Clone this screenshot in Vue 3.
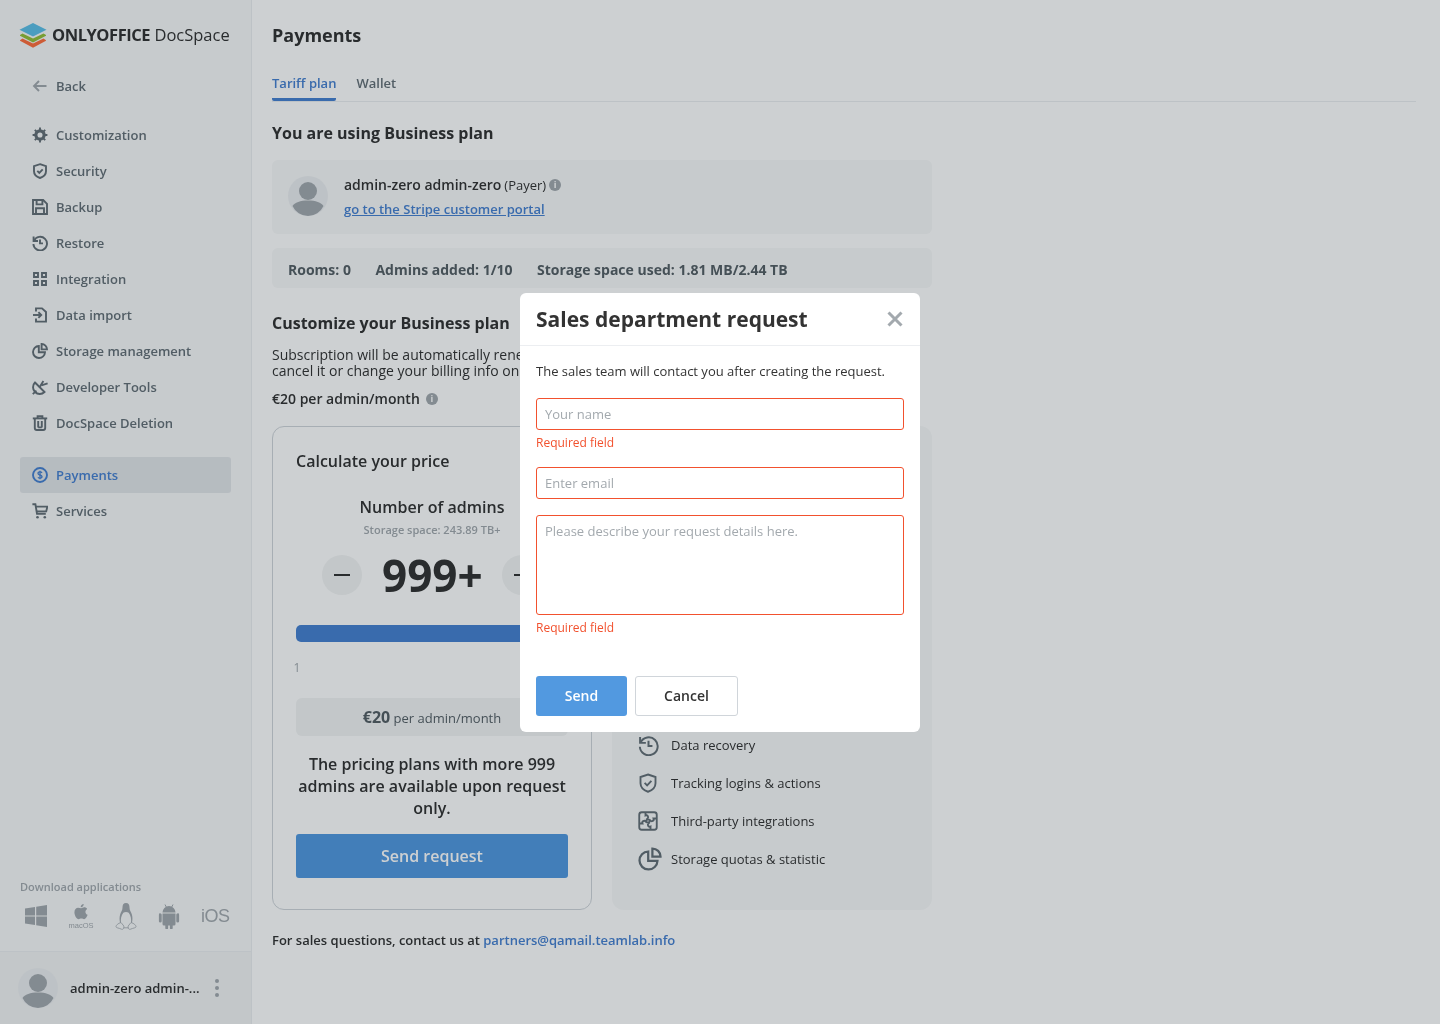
<script setup>
// --- DATA ---
const settingsMenu = [
  { label: 'Customization', paths: ['M8 .6v2.600M8 12.800v2.600M.6 8h2.600M12.800 8h2.600M2.800 2.800l1.800 1.800M11.400 11.400l1.800 1.800M2.800 13.200l1.800-1.800M11.400 4.600l1.800-1.800', 'M8 3.200a4.800 4.800 0 1 0 0 9.600a4.800 4.800 0 1 0 0-9.600z', 'M8 4.500a3.500 3.500 0 1 0 0 7a3.500 3.500 0 1 0 0-7z'] },
  { label: 'Security', paths: ['M8 1.200l6 2v5c0 3.400-2.600 5.600-6 6.800c-3.400-1.200-6-3.400-6-6.800v-5z', 'M5.300 7.900l2 2l3.400-3.600'] },
  { label: 'Backup', paths: ['M1 1h10.200l3.800 3.800v10.200h-14z', 'M4.600 1.400v4h5.800v-4', 'M4 14.600v-5.400h8v5.400'] },
  { label: 'Restore', paths: ['M1.600 1.600v4.400h4.400', 'M2 5.800a6.800 6.800 0 1 1-.6 3.200', 'M8 4.400v4h3'] },
  { label: 'Integration', paths: ['M2 2h4v4h-4z', 'M10 2h4v4h-4z', 'M2 10h4v4h-4z', 'M10 10h4v4h-4z'] },
  { label: 'Data import', paths: ['M4 4.400v-3h6l4 3.600v9.600h-10v-3', 'M1 8h8', 'M6.400 5.200l2.800 2.800l-2.800 2.800'] },
  { label: 'Storage management', paths: ['M6.800 3a6 6 0 1 0 6.200 6.200h-6.200z', 'M9.600 1a5.400 5.400 0 0 1 5.400 5.400h-5.400z'] },
  { label: 'Developer Tools', paths: ['M3 3.500l9.500 9.500a6.700 6.700 0 0 1-9.500-9.500z', 'M7.400 8.400l4-6.400', 'M9.400 6.400l6.200-2', 'M4.400 11.600l-3.600 3.600'] },
  { label: 'DocSpace Deletion', paths: ['M.8 3.400h14.400', 'M5.600 3.400v-2.200h4.800v2.200', 'M2.800 3.400v9.600a2 2 0 0 0 2 2h6.400a2 2 0 0 0 2-2v-9.600', 'M6.200 6v6.400M9.800 6v6.400M6.200 12.400h3.600'] },
]

const payIcon = ['M8 1a7 7 0 1 0 0 14a7 7 0 1 0 0-14z']
const payDollar = ['M10 5.900c-.5-.8-1.200-1.100-2-1.100c-1.200 0-2 .6-2 1.600c0 2.100 4 1.100 4 3.200c0 1-.8 1.600-2 1.600c-.8 0-1.600-.3-2-1', 'M8 3.800v8.400']
const cartIcon = ['M.4 1.200h3l1.600 9.600h8.800', 'M3.800 3.600h11.600l-1.200 4.800h-9.600']

const features = [
  { label: 'Data recovery', paths: ['M1.600 1.600v4.400h4.400', 'M2 5.800a6.800 6.800 0 1 1-.6 3.200', 'M8 4.400v4h3'], size: 21 },
  { label: 'Tracking logins & actions', paths: ['M8 1.200l6 2v5c0 3.400-2.600 5.600-6 6.800c-3.400-1.200-6-3.400-6-6.800v-5z', 'M5.300 7.900l2 2l3.400-3.600'], size: 20 },
  { label: 'Third-party integrations', paths: ['M3 1h10a2 2 0 0 1 2 2v10a2 2 0 0 1-2 2h-10a2 2 0 0 1-2-2v-10a2 2 0 0 1 2-2z', 'M6 1.200L6 3.600C8 2.800 8.800 5.200 7.400 6.400L9.600 7.400', 'M14.800 6L12.400 6C13.200 8 10.800 8.800 9.600 7.400L8.600 9.600', 'M10 14.800L10 12.400C8 13.200 7.200 10.800 8.600 9.600L6.400 8.600', 'M1.200 10L3.600 10C2.800 8 5.200 7.200 6.400 8.600L7.400 6.400'], size: 20 },
  { label: 'Storage quotas & statistic', paths: ['M6.800 3a6 6 0 1 0 6.200 6.200h-6.200z', 'M9.600 1a5.400 5.400 0 0 1 5.400 5.400h-5.400z'], size: 24 },
]
</script>

<template>
  <div class="page">
    <aside class="sidebar">
      <div class="logo">
        <svg class="logo-mark" viewBox="0 0 28 25" width="28" height="25">
          <path d="M14 15.500l-10.500-5l-2.500 1.500l0 .8l13 6.700l13-6.700l0-.8l-2.500-1.500z" fill="#95c038" />
          <path d="M14 20.500l-10.500-5l-2.500 1.700l0 .6l13 7l13-7l0-.6l-2.500-1.700z" fill="#ff6f3d" />
          <path d="M14 0l13.500 6.800l-13.500 6.800l-13.500-6.800z" fill="#5dc0e8" />
        </svg>
        <span class="logo-text"><b>ONLYOFFICE</b> DocSpace</span>
      </div>

      <div class="back-row">
        <svg viewBox="0 0 16 16" width="16" height="16" class="menu-icon back-icon">
          <path d="M14.500 8h-12.500M7 3l-5 5l5 5" />
        </svg>
        <span>Back</span>
      </div>

      <nav class="menu">
        <div v-for="item in settingsMenu" :key="item.label" class="menu-item">
          <svg viewBox="0 0 16 16" width="16" height="16" class="menu-icon">
            <path v-for="d in item.paths" :key="d" :d="d" />
          </svg>
          <span>{{ item.label }}</span>
        </div>
      </nav>

      <nav class="menu menu-bottom">
        <div class="menu-item active">
          <svg viewBox="0 0 16 16" width="16" height="16" class="menu-icon">
            <path v-for="d in payIcon" :key="d" :d="d" />
            <path v-for="d in payDollar" :key="d" :d="d" class="thin" />
          </svg>
          <span>Payments</span>
        </div>
        <div class="menu-item">
          <svg viewBox="0 0 16 16" width="16" height="16" class="menu-icon">
            <path v-for="d in cartIcon" :key="d" :d="d" />
            <circle cx="5.500" cy="14.300" r="1.300" class="dot" />
            <circle cx="12.800" cy="14.300" r="1.300" class="dot" />
          </svg>
          <span>Services</span>
        </div>
      </nav>

      <div class="downloads">
        <div class="downloads-title">Download applications</div>
        <div class="app-icons">
          <svg viewBox="0 0 24 24" width="24" height="24" class="app-icon">
            <path d="M1 4.500l10-1.500v8.400h-10zM12.200 2.800l10.800-1.800v10.400h-10.800zM1 12.600h10v8.400l-10-1.500zM12.200 12.600h10.800v10.400l-10.800-1.800z" />
          </svg>
          <div class="mac">
            <svg viewBox="0 0 20 20" width="18" height="19" class="app-icon">
              <path d="M10.200 5.300c.9 0 2-1 3.400-1c1.300 0 2.500.6 3.200 1.700c-2.800 1.600-2.300 5.500.6 6.600c-.8 2-2.400 4.900-4 4.900c-1.100 0-1.600-.7-3-.7c-1.500 0-2 .7-3 .7c-2.400 0-4.700-4.500-4.700-7.800c0-3.200 2-4.900 4-4.900c1.400 0 2.500 .5 3.500.5zM13 .6c.1 1.900-1.500 3.700-3.300 3.500c-.2-1.800 1.500-3.500 3.300-3.500z" />
            </svg>
            <span>macOS</span>
          </div>
          <svg viewBox="0 0 22 28" width="22" height="28" class="tux">
            <path d="M6 20.500c-3 .8-5 2.800-5 4.200c0 1.300 3 1.300 5 2.300c2 1 3.300-.5 2.800-3z" />
            <path d="M16 20.500c3 .8 5 2.800 5 4.200c0 1.300-3 1.300-5 2.300c-2 1-3.300-.5-2.800-3z" />
            <path d="M8.500 25.800h5" />
            <path d="M11 1c-2.600 0-3.500 1.800-3.500 4.500c0 2.800-1.500 4.300-2.300 6.800c-.8 2.500-.8 5.200-.2 8.200l1 .2c-.5-3.600.2-6.900 2.300-10c1.500-1 3.900-1 5.400 0c2.100 3.100 2.800 6.400 2.300 10l1-.2c.6-3 .6-5.700-.2-8.200c-.8-2.500-2.300-4-2.300-6.800c0-2.700-.9-4.500-3.500-4.500z" class="tux-fill" />
          </svg>
          <svg viewBox="0 0 24 26" width="24" height="26" class="app-icon">
            <path d="M5.500 9.500a6.500 6.500 0 0 1 13 0zM5.500 10.500h13v10.500a1.500 1.500 0 0 1-1.500 1.500h-1.300v2.500a1.400 1.400 0 0 1-2.800 0v-2.500h-1.800v2.500a1.400 1.400 0 0 1-2.800 0v-2.500h-1.300a1.500 1.500 0 0 1-1.500-1.500zM3.800 10.500a1.400 1.400 0 0 1 .9 1.300v6.400a1.400 1.400 0 0 1-2.800 0v-6.400a1.400 1.400 0 0 1 1.900-1.300zM20.200 10.500a1.400 1.400 0 0 1 1.900 1.300v6.400a1.400 1.400 0 0 1-2.800 0v-6.400a1.400 1.400 0 0 1 .9-1.300z" />
            <path d="M8 1.500l1.500 3M16 1.500l-1.500 3" class="antenna" />
          </svg>
          <span class="ios">iOS</span>
        </div>
      </div>

      <div class="profile">
        <svg viewBox="0 0 40 40" width="40" height="40" class="avatar">
          <circle cx="20" cy="20" r="20" fill="#eceef1" />
          <circle cx="20" cy="15" r="9" fill="#a3a9ae" />
          <path d="M4.500 30c2-3.500 8-5.500 15.500-5.500s13.500 2 15.500 5.500a17 17 0 0 1-15.500 10a17 17 0 0 1-15.500-10z" fill="#a3a9ae" />
        </svg>
        <span class="profile-name">admin-zero admin-...</span>
        <span class="kebab"><i></i><i></i><i></i></span>
      </div>
    </aside>

    <main class="content">
      <h1 class="page-title">Payments</h1>
      <div class="tabs">
        <div class="tab tab-active">Tariff plan</div>
        <div class="tab">Wallet</div>
      </div>

      <div class="plan-width">
        <h2 class="plan-title">You are using Business plan</h2>

        <div class="payer-box">
          <svg viewBox="0 0 40 40" width="40" height="40" class="avatar payer-avatar">
            <circle cx="20" cy="20" r="20" fill="#eceef1" />
            <circle cx="20" cy="15" r="9" fill="#a3a9ae" />
            <path d="M4.500 30c2-3.500 8-5.500 15.500-5.500s13.500 2 15.500 5.500a17 17 0 0 1-15.500 10a17 17 0 0 1-15.500-10z" fill="#a3a9ae" />
          </svg>
          <div>
            <div class="payer-name">
              admin-zero admin-zero <span class="payer-role">(Payer)</span>
              <span class="info">i</span>
            </div>
            <a class="portal-link">go to the Stripe customer portal</a>
          </div>
        </div>

        <div class="stats-box">
          <span>Rooms: 0</span>
          <span>Admins added: 1/10</span>
          <span>Storage space used: 1.81 MB/2.44 TB</span>
        </div>

        <h3 class="custom-title">Customize your Business plan</h3>
        <p class="custom-text">
          Subscription will be automatically renewed on the billing date. You can<br />
          cancel it or change your billing info on the Stripe customer portal.
        </p>
        <div class="per-admin">€20 per admin/month <span class="info">i</span></div>

        <div class="cards">
          <section class="calc-card">
            <div class="calc-title">Calculate your price</div>
            <div class="calc-sub">Number of admins</div>
            <div class="calc-storage">Storage space: 243.89 TB+</div>
            <div class="counter">
              <span class="circle-btn"><i class="minus"></i></span>
              <span class="count">999+</span>
              <span class="circle-btn"><i class="minus"></i></span>
            </div>
            <div class="slider"></div>
            <div class="slider-min">1</div>
            <div class="price-box"><b>€20</b> per admin/month</div>
            <p class="calc-note">The pricing plans with more 999 admins are available upon request only.</p>
            <div class="send-request">Send request</div>
          </section>

          <section class="benefits-card">
            <div v-for="f in features" :key="f.label" class="benefit">
              <span class="benefit-icon">
                <svg viewBox="0 0 16 16" :width="f.size" :height="f.size" class="menu-icon benefit-svg">
                  <path v-for="d in f.paths" :key="d" :d="d" />
                </svg>
              </span>
              <span>{{ f.label }}</span>
            </div>
          </section>
        </div>

        <div class="contact">
          For sales questions, contact us at <a>partners@qamail.teamlab.info</a>
        </div>
      </div>
    </main>

    <div class="overlay">
      <div class="dialog">
        <header class="dialog-head">
          <span>Sales department request</span>
          <svg viewBox="0 0 16 16" width="16" height="16" class="close-icon">
            <path d="M1.500 1.500l13 13M14.500 1.500l-13 13" />
          </svg>
        </header>
        <div class="dialog-body">
          <p class="dialog-text">The sales team will contact you after creating the request.</p>
          <input class="field" placeholder="Your name" />
          <div class="field-error">Required field</div>
          <input class="field field-email" placeholder="Enter email" />
          <textarea class="field field-area" placeholder="Please describe your request details here."></textarea>
          <div class="field-error">Required field</div>
          <div class="dialog-actions">
            <button class="btn btn-send">Send</button>
            <button class="btn btn-cancel">Cancel</button>
          </div>
        </div>
      </div>
    </div>
  </div>
</template>

<style>
html, body { margin: 0; background: #fff; }
</style>

<style scoped>
/* GENERAL */
.page {
  display: flex;
  height: 1024px;
  overflow: hidden;
  position: relative;
  will-change: transform;
  font-family: 'Open Sans', 'Noto Sans', sans-serif;
  color: #333;
  background: #fff;
}

/* SIDEBAR */
.sidebar {
  width: 251px;
  flex: none;
  background: #f8f9f9;
  border-right: 1px solid #eceef1;
  display: flex;
  flex-direction: column;
  font-size: 13px;
  font-weight: 600;
  color: #657077;
}
.logo {
  display: flex;
  align-items: center;
  gap: 5px;
  height: 24px;
  margin: 22px 0 0 19px;
}
.logo-mark { flex: none; margin-top: 2px; }
.logo-text {
  font-size: 16.500px;
  font-weight: 400;
  color: #333;
  white-space: nowrap;
}
.logo-text b { font-weight: 700; letter-spacing: -0.45px; }
.back-row {
  display: flex;
  align-items: center;
  gap: 8px;
  height: 36px;
  margin: 22px 0 0 32px;
}
.menu { margin: 13px 20px 0; }
.menu-bottom { margin-top: 16px; }
.menu-item {
  display: flex;
  align-items: center;
  gap: 8px;
  height: 36px;
  padding-left: 12px;
  border-radius: 3px;
}
.menu-item.active {
  background: #e3e6e9;
  color: #4781d1;
}
.menu-icon {
  flex: none;
  fill: none;
  stroke: #657077;
  stroke-width: 1.900;
}
.benefit-svg { stroke-width: 1.500; }
.thin { stroke-width: 1.300; }
.active .menu-icon { stroke: #4781d1; }
.back-icon { stroke: #a3a9ae; }
.dot { fill: #657077; stroke: none; }

.downloads { margin: auto 0 0 20px; }
.downloads-title {
  font-size: 11px;
  font-weight: 600;
  color: #a3a9ae;
  line-height: 15px;
}
.app-icons {
  display: flex;
  align-items: center;
  gap: 21px;
  height: 30px;
  margin: 7px 0 20px 4px;
}
.app-icon { fill: #a3a9ae; flex: none; }
.antenna { stroke: #a3a9ae; stroke-width: 1; fill: none; }
.tux {
  flex: none;
  fill: none;
  stroke: #a3a9ae;
  stroke-width: 0.800;
  margin: 0 -1px 0 3px;
}
.tux-fill { fill: #a3a9ae; stroke: none; }
.mac {
  display: flex;
  flex-direction: column;
  align-items: center;
  width: 28px;
  margin-right: -4px;
  margin-left: -2px;
}
.mac span {
  font-family: 'Liberation Sans', sans-serif;
  font-size: 7.500px;
  font-weight: 400;
  line-height: 8px;
  color: #a3a9ae;
}
.ios {
  font-family: 'Liberation Sans', sans-serif;
  font-size: 18px;
  font-weight: 400;
  color: #a3a9ae;
  margin-left: -1px;
  letter-spacing: -0.5px;
}
.profile {
  height: 73px;
  border-top: 1px solid #eceef1;
  background: #f3f4f4;
  display: flex;
  align-items: center;
  padding-left: 18px;
  box-sizing: border-box;
}
.avatar { flex: none; }
.profile-name {
  font-size: 13px;
  color: #333;
  margin-left: 12px;
  white-space: nowrap;
}
.kebab {
  display: flex;
  flex-direction: column;
  gap: 3px;
  margin-left: 15px;
}
.kebab i {
  width: 4px;
  height: 4px;
  border-radius: 50%;
  background: #a3a9ae;
}

/* MAIN */
.content {
  flex: 1;
  padding: 0 24px 0 20px;
  min-width: 0;
}
.page-title {
  margin: 21px 0 0;
  font-size: 18px;
  line-height: 28px;
  font-weight: 700;
}
.tabs {
  display: flex;
  gap: 20px;
  margin-top: 20px;
  border-bottom: 1px solid #eceef1;
  height: 33px;
  box-sizing: border-box;
}
.tab {
  font-size: 13px;
  font-weight: 600;
  color: #657077;
  line-height: 18px;
  padding-top: 5px;
  height: 32px;
  box-sizing: border-box;
}
.tab-active {
  color: #4781d1;
  border-bottom: 3px solid #4781d1;
  border-radius: 0 0 2px 2px;
}
.plan-width { width: 660px; }
.plan-title {
  margin: 20px 0 0;
  font-size: 16px;
  line-height: 22px;
  font-weight: 700;
}
.payer-box {
  display: flex;
  align-items: center;
  gap: 16px;
  height: 74px;
  margin-top: 16px;
  padding-left: 16px;
  background: #f8f9f9;
  border-radius: 6px;
}
.payer-avatar { margin-bottom: 2px; }
.payer-name {
  font-size: 14px;
  font-weight: 600;
  line-height: 18px;
  display: flex;
  align-items: center;
  gap: 3px;
}
.payer-role {
  font-size: 13px;
  font-weight: 400;
}
.info {
  display: inline-block;
  width: 12px;
  height: 12px;
  border-radius: 50%;
  background: #a3a9ae;
  color: #fff;
  font-size: 9px;
  font-weight: 700;
  line-height: 12px;
  text-align: center;
}
.portal-link {
  display: inline-block;
  font-size: 13px;
  font-weight: 600;
  line-height: 18px;
  margin-top: 6px;
  color: #4781d1;
  text-decoration: underline;
}
.stats-box {
  display: flex;
  align-items: center;
  gap: 24.500px;
  height: 40px;
  margin-top: 14px;
  padding: 2px 0 0 16px;
  box-sizing: border-box;
  background: #f8f9f9;
  border-radius: 6px;
  font-size: 14px;
  font-weight: 700;
  color: #555f65;
}
.custom-title {
  margin: 24px 0 0;
  font-size: 16px;
  font-weight: 700;
  line-height: 22px;
}
.custom-text {
  margin: 13px 0 0;
  font-size: 14px;
  line-height: 16px;
  white-space: nowrap;
  color: #333;
}
.per-admin {
  margin-top: 10px;
  font-size: 14px;
  font-weight: 600;
  line-height: 20px;
  display: flex;
  align-items: center;
  gap: 6px;
}
.cards {
  display: flex;
  gap: 20px;
  margin-top: 17px;
}
.calc-card {
  width: 320px;
  height: 484px;
  box-sizing: border-box;
  border: 1px solid #d0d5da;
  border-radius: 12px;
  padding: 23px 23px 0;
  text-align: center;
}
.calc-title {
  text-align: left;
  font-size: 16px;
  font-weight: 600;
  line-height: 22px;
}
.calc-sub {
  margin-top: 24px;
  font-size: 16px;
  font-weight: 600;
  line-height: 22px;
}
.calc-storage {
  margin-top: 4px;
  font-size: 11px;
  font-weight: 600;
  line-height: 16px;
  color: #a3a9ae;
}
.counter {
  display: flex;
  align-items: center;
  justify-content: center;
  margin-top: 17px;
  height: 40px;
  gap: 20px;
}
.circle-btn {
  width: 40px;
  height: 40px;
  border-radius: 50%;
  background: #f3f4f4;
  display: flex;
  align-items: center;
  justify-content: center;
  flex: none;
}
.minus {
  width: 16px;
  height: 2px;
  background: #333;
}
.count {
  font-size: 44px;
  font-weight: 700;
  line-height: 40px;
  width: 100px;
  white-space: nowrap;
}
.slider {
  margin-top: 30px;
  height: 17px;
  border-radius: 5px;
  background: #4781d1;
}
.slider-min {
  margin: 18px 0 0 -4px;
  width: 10px;
  font-size: 12px;
  font-weight: 400;
  line-height: 16px;
  color: #a3a9ae;
  text-align: center;
}
.price-box {
  margin-top: 22px;
  height: 38px;
  border-radius: 6px;
  background: #f3f4f4;
  font-size: 13px;
  line-height: 38px;
  color: #555f65;
}
.price-box b {
  font-size: 16px;
  font-weight: 700;
}
.calc-note {
  margin: 17px 0 0;
  font-size: 16px;
  font-weight: 600;
  line-height: 22px;
}
.send-request {
  margin-top: 15px;
  height: 44px;
  line-height: 44px;
  border-radius: 3px;
  background: #5299e0;
  color: #fff;
  font-size: 16px;
  font-weight: 600;
}
.benefits-card {
  width: 320px;
  height: 484px;
  box-sizing: border-box;
  background: #f8f9f9;
  border-radius: 12px;
  padding: 300px 0 0 24px;
  font-size: 13px;
  color: #333;
}
.benefit {
  display: flex;
  align-items: center;
  height: 38px;
}
.benefit-icon {
  width: 35px;
  flex: none;
  display: flex;
  align-items: center;
  padding-left: 2px;
  box-sizing: border-box;
}
.contact {
  margin-top: 21px;
  font-size: 13px;
  font-weight: 600;
  line-height: 18px;
}
.contact a { color: #4781d1; }

/* DIALOG */
.overlay {
  position: absolute;
  inset: 0;
  padding-top: 1px;
  box-sizing: border-box;
  background: rgba(6, 22, 28, 0.2);
  display: flex;
  align-items: center;
  justify-content: center;
}
.dialog {
  width: 400px;
  height: 439px;
  background: #fff;
  border-radius: 6px;
  display: flex;
  flex-direction: column;
}
.dialog-head {
  height: 53px;
  flex: none;
  box-sizing: border-box;
  border-bottom: 1px solid #eceef1;
  display: flex;
  align-items: center;
  justify-content: space-between;
  padding: 0 17px 0 16px;
  font-size: 21px;
  font-weight: 700;
}
.close-icon {
  stroke: #a3a9ae;
  stroke-width: 3;
  fill: none;
}
.dialog-body { padding: 15px 16px 0; }
.dialog-text {
  margin: 0;
  font-size: 13px;
  line-height: 20px;
}
.field {
  display: block;
  width: 100%;
  height: 32px;
  box-sizing: border-box;
  margin-top: 17px;
  padding: 0 8px;
  border: 1px solid #f2512e;
  border-radius: 3px;
  outline: none;
  font-family: inherit;
  font-size: 13px;
  background: #fff;
  resize: none;
}
.field::placeholder { color: #a3a9ae; opacity: 1; }
.field-email { margin-top: 16px; }
.field-area {
  height: 100px;
  margin-top: 16px;
  padding-top: 5px;
  line-height: 20px;
}
.field-error {
  margin-top: 5px;
  font-size: 12px;
  line-height: 16px;
  color: #f2512e;
}
.dialog-actions {
  display: flex;
  gap: 8px;
  margin-top: 40px;
}
.btn {
  height: 40px;
  box-sizing: border-box;
  border-radius: 3px;
  font-family: inherit;
  font-size: 14px;
  font-weight: 600;
  padding: 0 0 2px;
}
.btn-send {
  width: 91px;
  background: #5299e0;
  border: none;
  color: #fff;
}
.btn-cancel {
  width: 103px;
  background: #fff;
  border: 1px solid #d0d5da;
  color: #333;
}
</style>
